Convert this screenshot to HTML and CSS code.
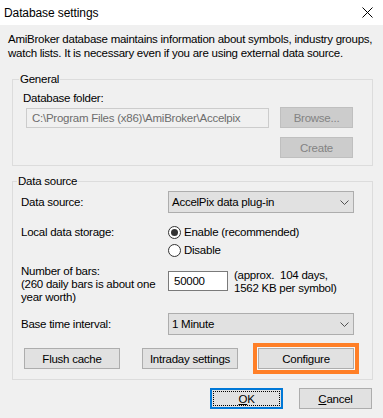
FILE: index.html
```html
<!DOCTYPE html>
<html>
<head>
<meta charset="utf-8">
<link rel="stylesheet" href="styles.css">
</head>
<body>
<div class="window">
  <div class="titlebar">
    <span class="title">Database settings</span>
    <svg class="close" width="11" height="11" viewBox="0 0 11 11"><path d="M0.5 0.5 L10.5 10.5 M10.5 0.5 L0.5 10.5" stroke="#000" stroke-width="1" fill="none"/></svg>
  </div>
  <div class="content">
    <p class="desc">AmiBroker database maintains information about symbols, industry groups,<br>watch lists. It is necessary even if you are using external data source.</p>

    <fieldset class="group general">
      <legend>General</legend>
      <div class="folder-label">Database folder:</div>
      <div class="folder-grid">
        <div class="edit disabled">C:\Program Files (x86)\AmiBroker\Accelpix</div>
        <div class="btn disabled">Browse...</div>
        <div class="btn disabled create">Create</div>
      </div>
    </fieldset>

    <fieldset class="group source">
      <legend>Data source</legend>
      <div class="row row-source">
        <div class="lbl">Data source:</div>
        <div class="combo"><span>AccelPix data plug-in</span><svg width="9" height="5" viewBox="0 0 9 5"><path d="M0.5 0.5 L4.5 4.5 L8.5 0.5" stroke="#505050" fill="none"/></svg></div>
      </div>
      <div class="row row-storage">
        <div class="lbl storage-lbl">Local data storage:</div>
        <div class="radios">
          <div class="radio"><span class="dot checked"></span>Enable (recommended)</div>
          <div class="radio"><span class="dot"></span>Disable</div>
        </div>
      </div>
      <div class="row row-bars">
        <div class="lbl bars-lbl">Number of bars:<br>(260 daily bars is about one<br>year worth)</div>
        <div class="bars-ctl">
          <div class="edit bars-edit">50000</div>
          <div class="bars-note">(approx.&nbsp; 104 days,<br>1562 KB per symbol)</div>
        </div>
      </div>
      <div class="row row-interval">
        <div class="lbl">Base time interval:</div>
        <div class="combo"><span>1 Minute</span><svg width="9" height="5" viewBox="0 0 9 5"><path d="M0.5 0.5 L4.5 4.5 L8.5 0.5" stroke="#505050" fill="none"/></svg></div>
      </div>
      <div class="row-buttons">
        <div class="btn flush">Flush cache</div>
        <div class="btn intraday">Intraday settings</div>
        <div class="btn configure">Configure</div>
      </div>
    </fieldset>

    <div class="footer">
      <div class="btn ok"><span class="focus"><u>O</u>K</span></div>
      <div class="btn cancel"><u>C</u>ancel</div>
    </div>
  </div>
</div>
</body>
</html>
```

FILE: styles.css
```css
* { box-sizing: border-box; }
html, body { margin: 0; padding: 0; }
body {
  width: 383px;
  height: 418px;
  overflow: hidden;
  background: #f0f0f0;
  font-family: "Liberation Sans", Arial, sans-serif;
  font-size: 11.5px;
  letter-spacing: -0.25px;
  color: #000;
  white-space: nowrap;
}
.window { width: 383px; height: 418px; background: #f0f0f0; }

.titlebar {
  height: 25px;
  background: #fff;
  display: flex;
  align-items: center;
  justify-content: space-between;
  padding: 0 10px 0 4px;
}
.title { font-size: 12px; line-height: 14px; letter-spacing: -0.1px; }
.close { display: block; margin-top: -1px; }

.content { padding-top: 7px; }

.desc {
  margin: 0 0 0 8px;
  line-height: 14px;
}

.group {
  margin: 0 10px 0 12px;
  border: 1px solid #dcdcdc;
  min-width: 0;
}
.group legend {
  padding: 0 1px;
  margin-left: -4px;
  line-height: 14px;
}
.general {
  margin-top: 12px;
  padding: 5px 19px 7px 10px;
}
.folder-label { line-height: 14px; }
.folder-grid {
  margin-top: 2px;
  display: grid;
  grid-template-columns: 243px 73px;
  column-gap: 11px;
  row-gap: 9px;
  padding-left: 3px;
  align-items: center;
}
.edit {
  height: 20px;
  border: 1px solid #7a7a7a;
  background: #fff;
  line-height: 18px;
  padding-left: 5px;
  overflow: hidden;
}
.edit.disabled {
  border-color: #cccccc;
  background: #f0f0f0;
  color: #6d6d6d;
}
.btn {
  height: 21px;
  border: 1px solid #adadad;
  background: #e1e1e1;
  display: flex;
  align-items: center;
  justify-content: center;
  line-height: 14px;
}
.btn.disabled {
  background: #cccccc;
  border-color: #bfbfbf;
  color: #838383;
}
.btn.create { grid-column: 2; }

.source {
  margin-top: 8px;
  padding: 3px 10px 10px 8px;
}
.row {
  display: grid;
  grid-template-columns: 147px 186px;
}
.lbl { line-height: 14px; }
.row-source, .row-interval { align-items: center; }
.combo {
  height: 22px;
  border: 1px solid #adadad;
  background: #e1e1e1;
  display: flex;
  align-items: center;
  justify-content: space-between;
  padding: 0 4px 0 3px;
}
.combo svg { display: block; }

.row-storage { margin-top: 10px; }
.storage-lbl { line-height: 18px; }
.radio {
  height: 18px;
  display: flex;
  align-items: center;
  gap: 3px;
}
.dot {
  width: 13px;
  height: 13px;
  border: 1px solid #333;
  border-radius: 50%;
  background: #fff;
  display: flex;
  align-items: center;
  justify-content: center;
}
.dot.checked::after {
  content: "";
  width: 7px;
  height: 7px;
  border-radius: 50%;
  background: #333;
}

.row-bars { margin-top: 6px; }
.bars-lbl { line-height: 13px; }
.bars-ctl {
  display: flex;
  align-items: flex-start;
  gap: 6px;
}
.bars-edit {
  width: 60px;
  margin-top: 6px;
  padding-left: 5px;
}
.bars-note {
  margin-top: 4px;
  line-height: 13px;
}

.row-interval { margin-top: 9px; }

.row-buttons {
  margin-top: 13px;
  display: flex;
}
.row-buttons .btn { width: 96px; }
.flush { margin-left: 3px; }
.intraday { margin-left: 22px; }
.configure {
  margin-left: 20px;
  outline: 4px solid #ff7f27;
  outline-offset: 1px;
  box-shadow: 0 0 0 1px #f8f8f8;
}

.footer {
  margin-top: 8px;
  display: flex;
  justify-content: flex-end;
  padding-right: 11px;
  gap: 16px;
}
.footer .btn { width: 73px; }
.ok {
  border: 2px solid #0078d7;
  padding: 1px;
}
.ok .focus {
  width: 100%;
  height: 100%;
  border: 1px dotted #000;
  display: flex;
  align-items: center;
  justify-content: center;
}
```
